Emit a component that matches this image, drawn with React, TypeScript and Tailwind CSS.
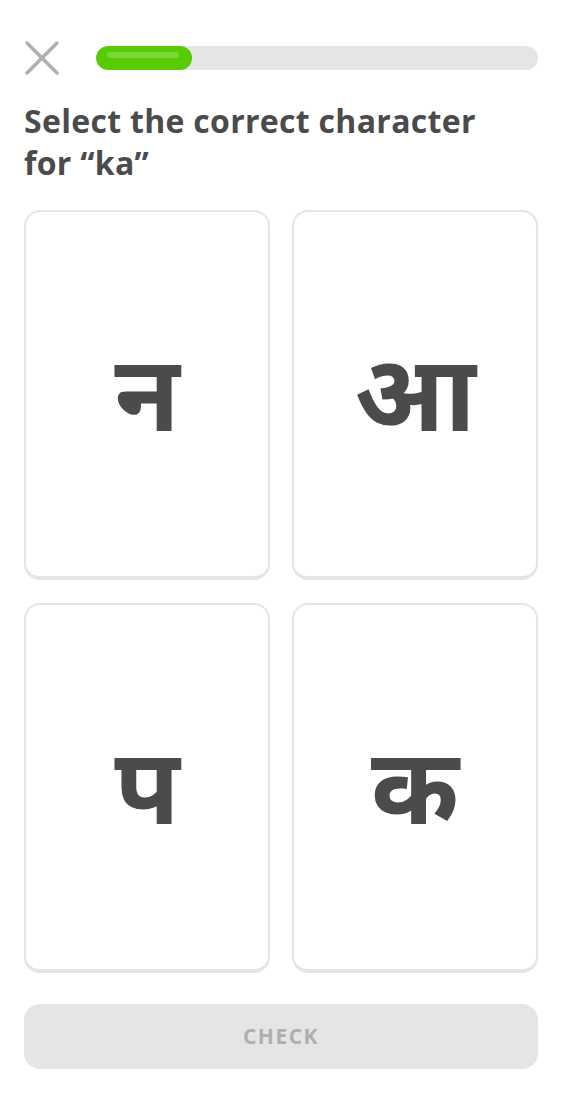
import React from 'react'

const CHOICES = ['न', 'आ', 'प', 'क']

const FONT = '"Open Sans", "Noto Sans", "Noto Sans Devanagari", "Lohit Devanagari", "FreeSans", sans-serif'

export default function App() {
  return (
    <div
      className="w-[562px] h-[1116px] bg-white flex flex-col px-[24px]"
      style={{ fontFamily: FONT }}
    >
      {/* Header */}
      <div className="flex items-center gap-[36px] pt-[40px] h-[76px]">
        <svg width="36" height="36" viewBox="0 0 36 36" className="shrink-0">
          <path d="M3 3 L33 33 M33 3 L3 33" stroke="#afafaf" strokeWidth="3.5" strokeLinecap="round" />
        </svg>
        <div className="flex-1 h-[24px] rounded-full bg-[#e5e5e5] overflow-hidden">
          <div className="w-[96px] h-full rounded-full bg-[#58cc02] pt-[6px] pl-[11px]">
            <div className="w-[72px] h-[6px] rounded-full bg-[#79d634]" />
          </div>
        </div>
      </div>

      {/* Prompt */}
      <h1 className="mt-[24px] max-w-[480px] text-[32px] leading-[42px] font-bold text-[#4b4b4b] tracking-[0.3px]">
        Select the correct character for “ka”
      </h1>

      {/* Choices */}
      <div className="grid grid-cols-2 gap-x-[22px] gap-y-[23px] mt-[26px]">
        {CHOICES.map((c) => (
          <button
            key={c}
            type="button"
            className="h-[370px] rounded-[16px] border-2 border-b-4 border-[#e5e5e5] bg-white flex items-center justify-center"
          >
            <span className="text-[106px] leading-none font-bold text-[#4b4b4b] -mt-[8px]">{c}</span>
          </button>
        ))}
      </div>

      {/* Footer */}
      <div className="mt-[31px]">
        <button
          type="button"
          className="w-full h-[65px] rounded-[16px] bg-[#e5e5e5] flex items-center justify-center"
        >
          <span className="text-[21px] font-bold tracking-[1.5px] text-[#afafaf]">CHECK</span>
        </button>
      </div>
    </div>
  )
}
